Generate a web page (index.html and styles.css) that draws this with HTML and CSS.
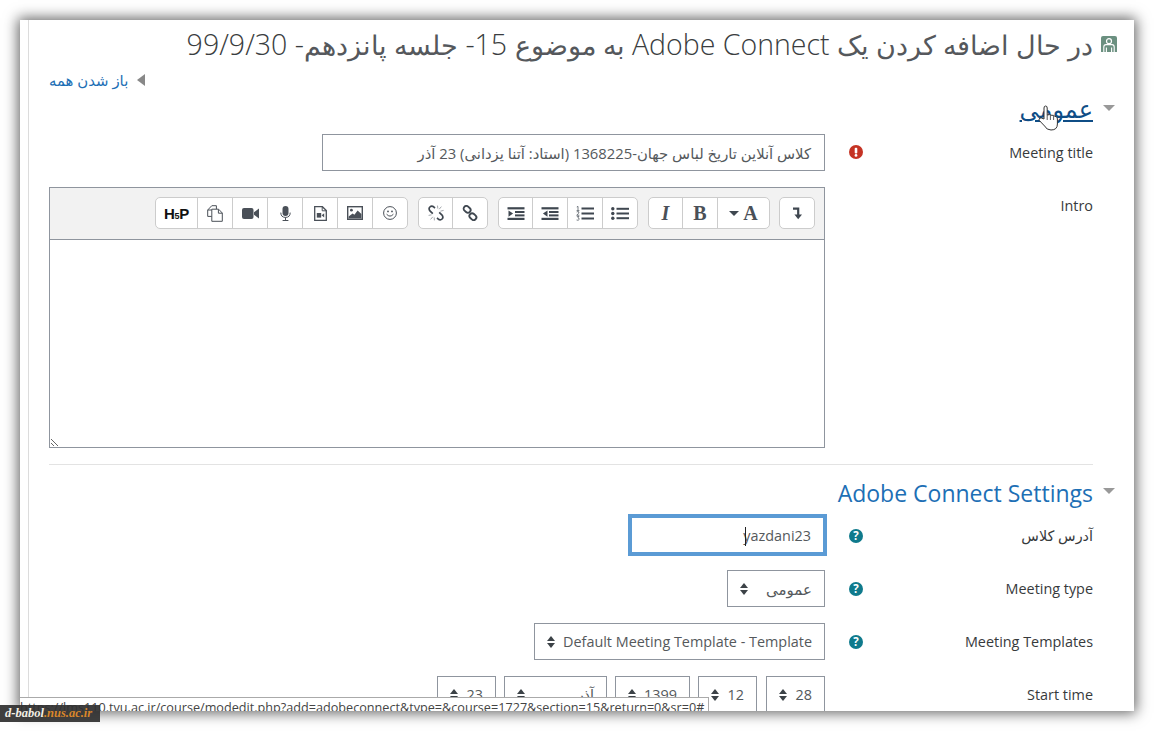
FILE: index.html
```html
<!DOCTYPE html>
<html lang="fa" dir="rtl">
<head>
<meta charset="utf-8">
<title>Adobe Connect</title>
<link rel="stylesheet" href="styles.css">
</head>
<body>
<div class="sheet">
  <main class="content">
    <h1 class="title">
      <svg class="activity-icon" viewBox="0 0 16 16" aria-hidden="true"><path d="M2 0H14Q16 0 16 2V16H0V2Q0 0 2 0Z" fill="#6b9080"/><circle cx="8" cy="5.2" r="2.5" fill="none" stroke="#fff" stroke-width="1.2"/><path d="M2.8 16V11Q2.8 8.6 5 8.6H11Q13.2 8.6 13.2 11V16M5.4 16V11.5M10.6 16V11.5" fill="none" stroke="#fff" stroke-width="1.1"/></svg>
      <span class="title-text"><span class="fa">در حال اضافه کردن یک</span> Adobe Connect <span class="fa">به موضوع</span> 15- <span class="fa">جلسه پانزدهم</span>- 99/9/30</span>
    </h1>
    <div class="expand-row">
      <span class="tri-left"></span>
      <a class="expand-link">باز شدن همه</a>
    </div>

    <section class="legend legend-first">
      <span class="tri-down"></span>
      <a class="legend-link hovered">عمومی</a>
    </section>
    <div class="row">
      <label class="label">Meeting title</label>
      <div class="marker">
        <svg class="help help-error" viewBox="0 0 14 14" aria-hidden="true"><circle cx="7" cy="7" r="7" fill="#c53324"/><rect x="5.7" y="2.8" width="2.6" height="5.6" rx="1" fill="#fff"/><circle cx="7" cy="10.4" r="1.4" fill="#fff"/></svg>
      </div>
      <div class="field field-title">کلاس آنلاین تاریخ لباس جهان-1368225 (استاد: آتنا یزدانی) 23 آذر</div>
    </div>
    <div class="row">
      <label class="label label-top">Intro</label>
      <div class="marker"></div>
      <div class="editor">
        <div class="toolbar">
          <div class="group group-first">
            <button class="btn"><svg viewBox="0 0 16 16"><path d="M4 3.6H9.2V10" fill="none" stroke="#3f4750" stroke-width="2.2"/><path d="M5.4 9.6H13L9.2 14.2Z" fill="#3f4750"/></svg></button>
          </div>
          <div class="group">
            <button class="btn btn-wide"><span class="serif">A</span><span class="caret-down"></span></button>
            <button class="btn"><span class="serif">B</span></button>
            <button class="btn"><span class="serif italic">I</span></button>
          </div>
          <div class="group">
            <button class="btn"><svg class="ic-w" viewBox="0 0 18 13"><circle cx="1.8" cy="1.8" r="1.7"/><circle cx="1.8" cy="6.5" r="1.7"/><circle cx="1.8" cy="11.2" r="1.7"/><rect x="5.5" y=".8" width="12.5" height="2"/><rect x="5.5" y="5.5" width="12.5" height="2"/><rect x="5.5" y="10.2" width="12.5" height="2"/></svg></button>
            <button class="btn"><svg class="ic-w ic-tall" viewBox="0 0 18 15"><rect x="5.5" y="1.5" width="12.5" height="2"/><rect x="5.5" y="6.5" width="12.5" height="2"/><rect x="5.5" y="11.5" width="12.5" height="2"/><path d="M.8 1L2 .4V4.4M.6 4.6H3.4M.7 6Q2 5 3 6Q3.2 7.2 .7 9.2H3.4M.8 10.4H3L1.9 11.8Q3.4 12 3.2 13.4Q2.4 14.8 .6 14" fill="none" stroke="#3f4750" stroke-width=".7"/></svg></button>
            <button class="btn"><svg class="ic-w" viewBox="0 0 17 13"><rect width="17" height="2.2" y=".2"/><rect x="7.5" y="4" width="9.5" height="2"/><rect x="7.5" y="7.4" width="9.5" height="2"/><rect y="10.8" width="17" height="2.2"/><path d="M6 3.4V9.8L1.4 6.6Z"/></svg></button>
            <button class="btn"><svg class="ic-w" viewBox="0 0 17 13"><rect width="17" height="2.2" y=".2"/><rect x="7.5" y="4" width="9.5" height="2"/><rect x="7.5" y="7.4" width="9.5" height="2"/><rect y="10.8" width="17" height="2.2"/><path d="M1 3.4V9.8L5.6 6.6Z"/></svg></button>
          </div>
          <div class="group">
            <button class="btn"><svg viewBox="0 0 16 16"><g fill="none" stroke="#3f4750" stroke-width="1.9"><rect x="1.4" y="1.6" width="7.4" height="5.4" rx="2.7" transform="rotate(42 5.1 4.3)"/><rect x="7.2" y="9" width="7.4" height="5.4" rx="2.7" transform="rotate(42 10.9 11.7)"/></g></svg></button>
            <button class="btn"><svg viewBox="0 0 16 16"><g fill="none" stroke="#3f4750" stroke-width="1.7"><path d="M7 3L5.6 1.8Q3.6 .4 1.9 2T2.2 6.2L4.8 8.6"/><path d="M9 13L10.4 14.2Q12.4 15.6 14.1 14T13.8 9.8L11.2 7.4"/></g><path d="M9.5 .6L9.8 3.6M13.4 1.6L11.2 4.2M15.6 5.4L12.4 6.2M.6 10.4L3.6 9.8M2.6 14.4L4.8 11.8M6.4 15.4L6.2 12.4" fill="none" stroke="#8d9298" stroke-width=".8"/></svg></button>
          </div>
          <div class="group">
            <button class="btn"><svg class="ic-smile" viewBox="0 0 14 14"><circle cx="7" cy="7" r="6.4" fill="none" stroke="#4a5058" stroke-width="1"/><circle cx="5" cy="5.4" r=".9" fill="#4a5058"/><circle cx="9" cy="5.4" r=".9" fill="#4a5058"/><path d="M3.6 8.2Q7 12 10.4 8.2" fill="none" stroke="#4a5058" stroke-width="1"/></svg></button>
            <button class="btn"><svg class="ic-img" viewBox="0 0 16 14"><rect x=".7" y=".7" width="14.6" height="12.6" fill="#fff" stroke="#4a5058" stroke-width="1.4"/><circle cx="4.4" cy="4.2" r="1.4" fill="#4a5058"/><path d="M1.6 12.4V10.4L5.6 7.4L7.4 8.8L10.6 4.4L14.4 8V12.4Z" fill="#4a5058"/></svg></button>
            <button class="btn"><svg class="ic-file" viewBox="0 0 13 15"><path d="M.7.7H8.4L12.3 4.6V14.3H.7Z" fill="#fff" stroke="#4a5058" stroke-width="1.3"/><path d="M8.2.8V4.8H12.2" fill="none" stroke="#4a5058"/><rect x="2.8" y="7" width="4.4" height="4.6" fill="#4a5058"/><path d="M7.6 9.2L10.2 7.2V11.6Z" fill="#4a5058"/></svg></button>
            <button class="btn"><svg class="ic-mic" viewBox="0 0 11 15"><rect x="2.5" y="0" width="6" height="10" rx="3" fill="#4a5058"/><path d="M.8 6.6Q.8 11.4 5.5 11.4T10.2 6.6M5.5 11.4V14.4M2.6 14.5H8.4" fill="none" stroke="#4a5058" stroke-width="1"/></svg></button>
            <button class="btn"><svg class="ic-vid" viewBox="0 0 17 11"><rect width="11.5" height="11" rx="2" fill="#4a5058"/><path d="M12 4.2L17 .4V10.6L12 6.8Z" fill="#4a5058"/></svg></button>
            <button class="btn"><svg class="ic-copy" viewBox="0 0 16 17"><path d="M4.8 11.4H.7V5L4.8.7H9.4V4.2" fill="#fff" stroke="#4a5058"/><path d="M4.8 4.2H11.6L15.3 8V16.3H4.8Z" fill="#fff" stroke="#4a5058"/><path d="M.8 5H4.8M11.4 4.4V8.2H15.2" fill="none" stroke="#4a5058"/></svg></button>
            <button class="btn btn-h5p"><span class="h5p">H<small>5</small>P</span></button>
          </div>
        </div>
        <div class="editor-area"></div>
        <svg class="resize" viewBox="0 0 9 9" aria-hidden="true"><path d="M1 1L8 8M1 5L4 8" stroke="#666" fill="none"/></svg>
      </div>
    </div>
    <hr class="divider">
    <section class="legend">
      <span class="tri-down"></span>
      <a class="legend-link">Adobe Connect Settings</a>
    </section>
    <div class="row">
      <label class="label">آدرس کلاس</label>
      <div class="marker">
        <svg class="help" viewBox="0 0 14 14" aria-hidden="true"><circle cx="7" cy="7" r="7" fill="#0f7a8c"/><text x="7" y="11" class="help-q">?</text></svg>
      </div>
      <div class="field field-focus"><span class="caret"></span><span dir="ltr">yazdani23</span></div>
    </div>
    <div class="row">
      <label class="label">Meeting type</label>
      <div class="marker">
        <svg class="help" viewBox="0 0 14 14" aria-hidden="true"><circle cx="7" cy="7" r="7" fill="#0f7a8c"/><text x="7" y="11" class="help-q">?</text></svg>
      </div>
      <div class="select select-type"><span class="fa-value">عمومی</span><span class="updown"></span></div>
    </div>
    <div class="row">
      <label class="label">Meeting Templates</label>
      <div class="marker">
        <svg class="help" viewBox="0 0 14 14" aria-hidden="true"><circle cx="7" cy="7" r="7" fill="#0f7a8c"/><text x="7" y="11" class="help-q">?</text></svg>
      </div>
      <div class="select select-template"><span dir="ltr">Default Meeting Template - Template</span><span class="updown"></span></div>
    </div>
    <div class="row row-date">
      <label class="label">Start time</label>
      <div class="marker"></div>
      <div class="date-group">
        <div class="select select-sm"><span>28</span><span class="updown"></span></div>
        <div class="select select-sm"><span>12</span><span class="updown"></span></div>
        <div class="select select-year"><span>1399</span><span class="updown"></span></div>
        <div class="select select-month"><span>آذر</span><span class="updown"></span></div>
        <div class="select select-sm"><span>23</span><span class="updown"></span></div>
      </div>
    </div>
  </main>
  <svg class="cursor" viewBox="0 0 20 26" aria-hidden="true"><path d="M6 14V3Q6 1 7.6 1T9.2 3V10L11.6 9.6Q12.6 9.4 13 10.2L15.4 10.4Q16.4 10.4 16.6 11.3L18 11.6Q19.4 12 19.4 14V19Q19.4 25 13 25Q8.6 25 6.6 21L1.4 15.6Q.4 14 2 13Q3.4 12.6 6 14Z" fill="#fff" stroke="#333" stroke-width="1"/><path d="M9.2 10V15M12.4 10V15M15.6 11V15" stroke="#333" stroke-width=".8" fill="none"/></svg>
  <div class="status" dir="ltr">https://lms110.tvu.ac.ir/course/modedit.php?add=adobeconnect&amp;type=&amp;course=1727&amp;section=15&amp;return=0&amp;sr=0#</div>
</div>
<div class="badge" dir="ltr">d-babol<b>.nus.ac.ir</b></div>
</body>
</html>
```
FILE: styles.css
```css
* { box-sizing: border-box; }
html, body { margin: 0; height: 731px; overflow: hidden; background: #fff; }
body {
  padding: 20px;
  font-family: "Open Sans", "DejaVu Sans", sans-serif;
  font-size: 14.4px;
  color: #373a3c;
}
.sheet {
  position: relative;
  height: 691px;
  background: #fff;
  overflow: hidden;
  box-shadow: 0 0 13px 2px rgba(0,0,0,.62);
  padding: 0 41px 0 8px;
}
.content {
  height: 100%;
  border-left: 1px solid #dcdcdc;
  padding-left: 20px;
}
.title {
  display: flex;
  align-items: center;
  gap: 8px;
  height: 48px;
  margin: 0 -24px 0 0;
  font-size: 28.5px;
  font-weight: 300;
  line-height: 48px;
  color: #3a3d40;
  white-space: nowrap;
}
.title .fa { font-size: 27px; color: #55585c; }
.activity-icon { width: 16px; height: 16px; flex: none; }
.expand-row {
  display: flex;
  align-items: center;
  justify-content: flex-end;
  gap: 9px;
  height: 24px;
  font-size: 14.9px;
}
.expand-link { color: #1d6fb5; }
.tri-left {
  border-style: solid;
  border-width: 6px 8px 6px 0;
  border-color: transparent #888 transparent transparent;
}
.legend {
  position: relative;
  display: flex;
  align-items: center;
  height: 32px;
  margin-top: 12px;
  margin-bottom: 8px;
}
.legend-first { margin-top: 1px; margin-bottom: 9px; }
.tri-down {
  position: absolute;
  right: -22px;
  top: 11px;
  border-style: solid;
  border-width: 6px 6px 0;
  border-color: #999 transparent transparent;
}
.legend-first .tri-down { top: 12px; }
.legend-link { font-size: 23px; color: #1d6fb5; line-height: 32px; }
.legend-link.hovered { color: #0f4d86; text-decoration: underline; font-size: 24px; }
.row {
  display: grid;
  grid-template-columns: 217px 51px 1fr;
  margin-bottom: 16px;
  align-items: center;
  height: 37px;
}
.row:has(.editor) { height: 261px; align-items: start; }
.row-date { margin-top: 2px; }
.label { color: #373a3c; }
.label-top { padding-top: 9px; }
.marker { display: flex; padding-inline-start: 13px; }
.help { width: 14px; height: 14px; display: block; overflow: visible; }
.help-error { margin-top: -1px; }
.help-q { font: 700 11.5px "Open Sans", sans-serif; fill: #fff; text-anchor: middle; }
.field {
  height: 37px;
  border: 1px solid #8f959e;
  padding: 0 13px;
  display: flex;
  align-items: center;
  justify-self: start;
  color: #55595c;
  white-space: nowrap;
}
.field-title { width: 503px; font-size: 14.8px; }
.field-focus {
  align-self: start;
  margin-top: -1px;
  width: 195px;
  height: 38px;
  border: 2px solid #5b9bd5;
  outline: 2px solid #5b9bd5;
  padding: 0 12px;
  position: relative;
}
.caret {
  position: absolute;
  left: 113px;
  top: 9px;
  width: 1px;
  height: 19px;
  background: #222;
}
.select {
  height: 37px;
  border: 1px solid #8f959e;
  padding: 0 12px;
  display: flex;
  align-items: center;
  justify-content: space-between;
  justify-self: start;
  color: #55595c;
  white-space: nowrap;
  background: #fff;
}
.fa-value { font-size: 15px; }
.select-type { width: 98px; }
.select-template { width: 291px; }
.select-sm { width: 59px; }
.select-year { width: 75px; }
.select-month { width: 103px; }
.date-group { display: flex; gap: 8px; justify-self: start; }
.date-group .select:first-child { margin-left: 1px; }
.updown {
  position: relative;
  width: 9px;
  height: 12px;
  flex: none;
}
.updown::before, .updown::after {
  content: "";
  position: absolute;
  left: 0;
  border-style: solid;
  border-color: #3c4247 transparent;
}
.updown::before { top: 0; border-width: 0 4.5px 5px; }
.updown::after { bottom: 0; border-width: 5px 4.5px 0; }
.editor {
  position: relative;
  height: 261px;
  border: 1px solid #8f959e;
}
.toolbar {
  display: flex;
  gap: 10px;
  height: 52px;
  padding: 9px 9px 0;
  background: #f2f2f2;
  border-bottom: 1px solid #8f959e;
}
.group {
  display: flex;
  height: 32px;
  border: 1px solid #ccc;
  border-radius: 5px;
  background: #fff;
}
.group-first { margin-inline-end: -1px; }
.btn {
  width: 35px;
  height: 30px;
  padding: 0;
  border: 0;
  border-right: 1px solid #ccc;
  background: transparent;
  display: flex;
  align-items: center;
  justify-content: center;
}
.btn:first-child { border-right: 0; width: 34px; }
.btn:last-child { width: 34px; }
.btn svg { width: 16px; height: 16px; display: block; fill: #3f4750; }
.btn .ic-w { width: 18px; height: 13px; }
.btn .ic-tall { height: 15px; }
.btn .ic-smile { width: 14px; height: 14px; }
.btn .ic-img { width: 16px; height: 14px; }
.btn .ic-file { width: 13px; height: 15px; }
.btn .ic-mic { width: 11px; height: 15px; }
.btn .ic-vid { width: 17px; height: 11px; }
.btn .ic-copy { width: 16px; height: 17px; }
.btn.btn-wide { width: 51px; gap: 4px; }
.btn.btn-h5p { width: 42px; }
.serif { font: 700 20px/1 "Liberation Serif", serif; color: #4a5058; }
.italic { font-style: italic; }
.caret-down {
  border-style: solid;
  border-width: 5px 5.5px 0;
  border-color: #3f4750 transparent transparent;
}
.h5p { direction: ltr; font: 900 15px/1 "Liberation Sans", sans-serif; color: #111; letter-spacing: -.3px; }
.h5p small { font-size: 9px; }
.editor-area { height: 207px; background: #fff; }
.resize { position: absolute; left: 0; bottom: 0; width: 9px; height: 9px; }
.divider { height: 1px; margin: 0; border: 0; background: #e3e3e3; }
.cursor { position: absolute; left: 1018px; top: 85px; width: 20px; height: 26px; }
.status {
  position: absolute;
  left: 0;
  top: 677px;
  width: 689px;
  height: 24px;
  background: #fff;
  border-top: 1px solid #aaa;
  border-right: 1px solid #aaa;
  font-size: 12.65px;
  line-height: 15px;
  padding-top: 2px;
  color: #444;
  white-space: nowrap;
  overflow: hidden;
}
.badge {
  position: absolute;
  left: 0;
  top: 705px;
  width: 100px;
  height: 17px;
  background: rgba(48,48,48,.93);
  color: #f4f0e6;
  font: italic 700 12.5px/17px "Liberation Serif", serif;
  padding-left: 5px;
  white-space: nowrap;
}
.badge b { color: #d8862b; }
```
